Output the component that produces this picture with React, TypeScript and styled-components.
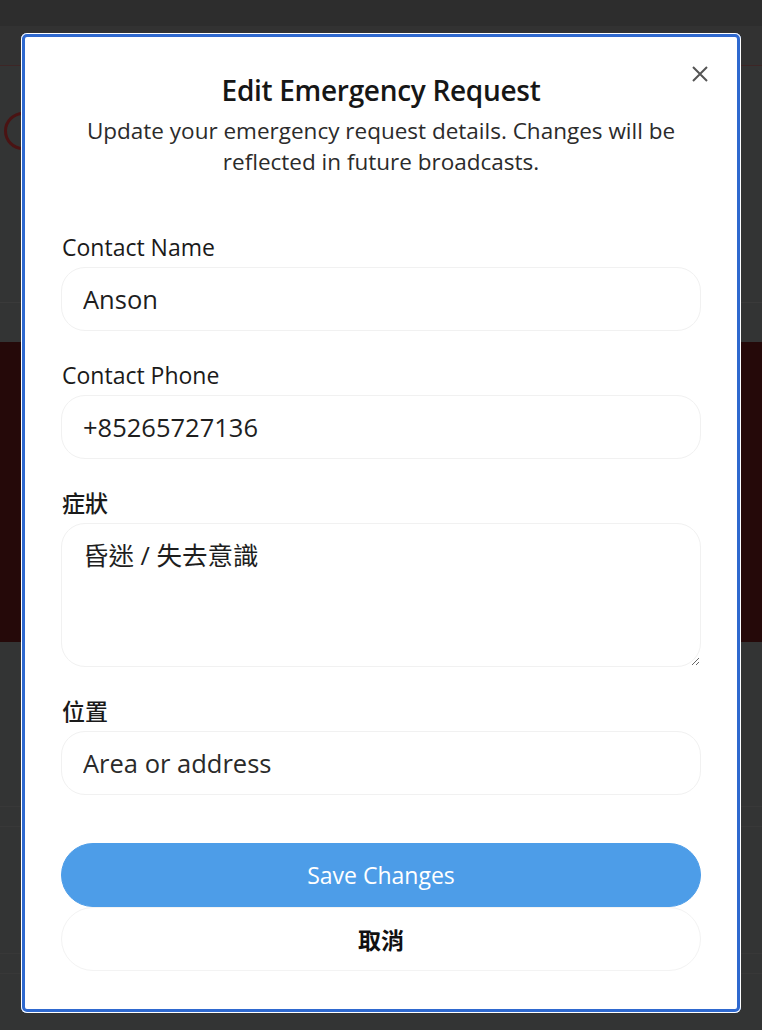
import * as React from "react";
import styled, { createGlobalStyle } from "styled-components";

const GlobalStyle = createGlobalStyle`
  html, body {
    margin: 0;
    padding: 0;
    background: #333434;
    font-family: "Open Sans", "Noto Sans CJK TC", sans-serif;
  }
  * {
    box-sizing: border-box;
  }
`;

// dimmed page behind the dialog
const SPage = styled.div`
  width: 762px;
  height: 1030px;
  overflow: hidden;
  background: #333434;
`;

const SPageHeader = styled.div`
  height: 66px;
  background: linear-gradient(#2d2d2d 0 26px, #323232 26px);
  border-bottom: 1px solid #3d2626;
`;

const SPageStatus = styled.div`
  height: 237px;
  padding: 46px 0 0 4px;
  border-bottom: 1px solid #3a3a3a;
`;

const SStatusIcon = styled.div`
  width: 38px;
  height: 38px;
  border-radius: 50%;
  border: 3px solid #4a1313;
`;

const SPageGap = styled.div`
  height: 39px;
`;

const SAlertBand = styled.div`
  height: 300px;
  background: #250909;
`;

const SPageRow = styled.div<{ $h: number }>`
  height: ${(p) => p.$h}px;
  border-bottom: 1px solid #383838;
`;

// dialog
const SOverlay = styled.div`
  position: fixed;
  inset: 0;
  display: flex;
  align-items: flex-start;
  justify-content: center;
  padding-top: 33px;
`;

const SDialog = styled.div`
  position: relative;
  width: 720px;
  background: #ffffff;
  border-radius: 6px;
  box-shadow: inset 0 0 0 1px #ffffff, inset 0 0 0 4px #2f69cf;
  padding: 40px 40px 42px 40px;
  display: flex;
  flex-direction: column;
`;

const SClose = styled.button`
  position: absolute;
  top: 31px;
  right: 31px;
  width: 20px;
  height: 20px;
  padding: 0;
  border: none;
  background: transparent;
  display: flex;
  align-items: center;
  justify-content: center;
  cursor: pointer;
`;

const SHeader = styled.div`
  display: flex;
  flex-direction: column;
  align-items: center;
  text-align: center;
  margin-bottom: 58px;
`;

const STitle = styled.h2`
  margin: 0;
  font-size: 28px;
  line-height: 34px;
  font-weight: 600;
  color: #161616;
  letter-spacing: -0.3px;
`;

const SSubtitle = styled.p`
  margin: 8px 0 0;
  max-width: 620px;
  font-size: 22.5px;
  line-height: 31px;
  color: #2b2b2b;
`;

const SForm = styled.div`
  display: flex;
  flex-direction: column;
`;

const SField = styled.label`
  display: flex;
  flex-direction: column;
  gap: 4px;
  margin-bottom: 32px;
`;

const SLabel = styled.span`
  font-size: 23px;
  line-height: 28px;
  font-weight: 500;
  color: #1a1a1a;
  padding-left: 1px;
  margin-top: -2px;
  margin-bottom: 2px;
`;

const SInput = styled.input`
  height: 64px;
  width: 100%;
  border: 1px solid #f1f1f1;
  border-radius: 24px;
  padding: 0 21px;
  font-family: "Open Sans", "Noto Sans CJK TC", sans-serif;
  font-size: 25.5px;
  color: #1e1e1e;
  background: #ffffff;
  outline: none;
  &::placeholder {
    color: #2a2a2a;
  }
`;

const STextArea = styled.textarea`
  height: 144px;
  width: 100%;
  border: 1px solid #f1f1f1;
  border-radius: 24px;
  padding: 14px 21px;
  font-family: "Open Sans", "Noto Sans CJK TC", sans-serif;
  font-size: 25.5px;
  line-height: 34px;
  color: #1e1e1e;
  background: #ffffff;
  outline: none;
  resize: vertical;
`;

const SActions = styled.div`
  display: flex;
  flex-direction: column;
  margin-top: 16px;
`;

const SButton = styled.button<{ $primary?: boolean }>`
  height: 64px;
  width: 100%;
  border-radius: 32px;
  border: 1px solid ${(p) => (p.$primary ? "#4d9de8" : "#f3f3f3")};
  background: ${(p) => (p.$primary ? "#4d9de8" : "#ffffff")};
  color: ${(p) => (p.$primary ? "#ffffff" : "#111111")};
  font-family: "Open Sans", "Noto Sans CJK TC", sans-serif;
  font-size: 23px;
  font-weight: ${(p) => (p.$primary ? 500 : 700)};
  cursor: pointer;
`;

const CloseIcon = () => (
  <svg width="16" height="16" viewBox="0 0 16 16">
    <path d="M1 1L15 15M15 1L1 15" stroke="#555" strokeWidth="2" strokeLinecap="butt" />
  </svg>
);

interface FieldProps {
  label: string;
  value?: string;
  placeholder?: string;
}

const Field = (props: FieldProps) => (
  <SField>
    <SLabel>{props.label}</SLabel>
    <SInput defaultValue={props.value} placeholder={props.placeholder} />
  </SField>
);

const App = () => {
  return (
    <>
      <GlobalStyle />
      <SPage>
        <SPageHeader />
        <SPageStatus>
          <SStatusIcon />
        </SPageStatus>
        <SPageGap />
        <SAlertBand />
        <SPageRow $h={165} />
        <SPageRow $h={20} />
        <SPageRow $h={127} />
        <SPageRow $h={20} />
      </SPage>
      <SOverlay>
        <SDialog role="dialog">
          <SClose aria-label="Close">
            <CloseIcon />
          </SClose>
          <SHeader>
            <STitle>Edit Emergency Request</STitle>
            <SSubtitle>
              Update your emergency request details. Changes will be reflected in future broadcasts.
            </SSubtitle>
          </SHeader>
          <SForm>
            <Field label="Contact Name" value="Anson" />
            <Field label="Contact Phone" value="+85265727136" />
            <SField>
              <SLabel>症狀</SLabel>
              <STextArea defaultValue="昏迷 / 失去意識" />
            </SField>
            <Field label="位置" placeholder="Area or address" />
          </SForm>
          <SActions>
            <SButton $primary>Save Changes</SButton>
            <SButton>取消</SButton>
          </SActions>
        </SDialog>
      </SOverlay>
    </>
  );
};

export default App;
